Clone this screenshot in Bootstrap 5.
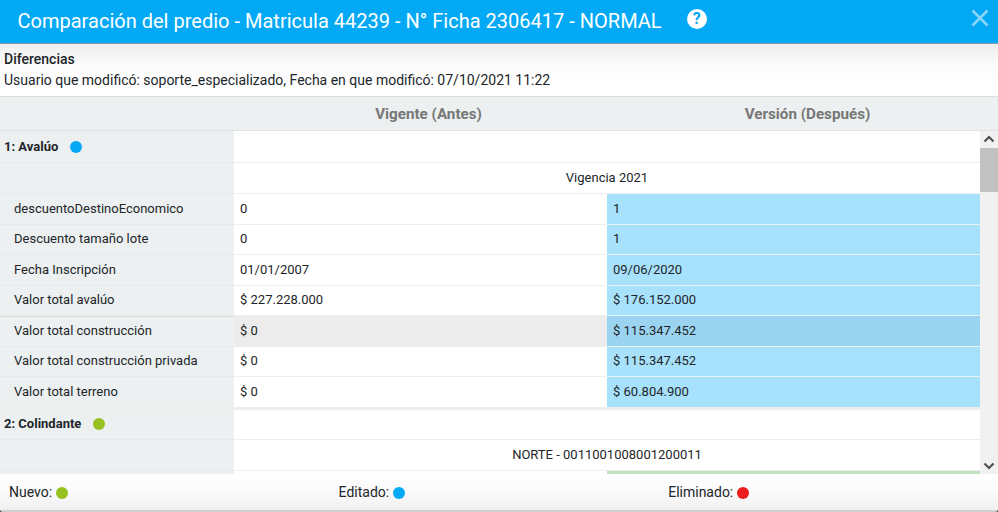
<!DOCTYPE html>
<html lang="es">
<head>
<meta charset="utf-8">
<title>Comparación del predio</title>
<link href="https://cdn.jsdelivr.net/npm/bootstrap@5.3.0/dist/css/bootstrap.min.css" rel="stylesheet">
<style>
html,body{height:100%;margin:0;overflow:hidden;background:#444}
body{font-family:Roboto,"Liberation Sans",sans-serif;font-size:13px;color:#212529;line-height:1.2}
.shell{width:998px;height:512px;border-radius:0 0 3px 3px;overflow:hidden;border-bottom:2px solid #d0d0d0;background:#fff}
.topbar{height:44px;flex:none;background:#03a9f4;border-bottom:1px solid #8a9aa3;color:#fff;padding:0 9px 2px 17.5px}
.topbar h1{font-size:20px;font-weight:400;margin:0;line-height:42px;letter-spacing:.01px}
.helpdot{width:20px;height:20px;border-radius:50%;background:#fff;color:#03a9f4;font-weight:700;font-size:16px;line-height:20px;text-align:center;margin-left:25px;margin-top:-3px}
.closex{margin-left:auto;margin-top:-5px}
.infobox{height:53px;flex:none;padding:7px 4px 0;background:linear-gradient(#efefef 0,#fbfbfb 22px,#fff 40px);border-bottom:1px solid #dcdcdc;font-size:14px}
.infobox b{font-weight:500;display:block;font-size:14px;line-height:17px;margin-bottom:4px}
.infobox span{line-height:17px;display:block}
.headrow{height:34px;flex:none;background:#ecf0f1;border-bottom:1px solid #dee2e3;color:#777;font-size:15.2px;font-weight:700}
.headrow div{text-align:center;line-height:34px}
.hcell0{width:239px}.hcell1{width:379px}.hcell2{width:379px}
.scrollarea{height:343px;flex:none;overflow:hidden}
.tablewrap{flex:1;min-width:0;overflow:hidden}
.cmp{table-layout:fixed;width:980px;border-collapse:separate;border-spacing:0;margin:0}
.cmp td{height:30.5px;padding:0 6px;border-bottom:1px solid #eee;font-size:13px;background:#fff;vertical-align:middle;white-space:nowrap}
.cmp td.lbl{background:#ecf0f1;padding-left:14px;border-bottom-color:#e6eaeb}
.cmp td.sect{padding-left:4px;font-weight:700;font-size:13px}
.cmp tr.tall1 td{height:32px}
.cmp tr.tall2 td{height:31px}
.cmp tr.tall3 td{height:30.5px}
.cmp tr.last td{border-bottom:0;height:29.5px}
.cmp td.mid{text-align:center}
.cmp td.blue{background:#a7e1fc;border-bottom-color:#e8f3f8}
.cmp tr.hov td{background:#ececec}
.cmp tr.hov td.lbl{background:#ecf0f1;box-shadow:inset 0 1px 0 #dcdcdc}
.cmp tr.hov td.blue{background:#9ad4f0}
.cmp tr.gap td{height:3px;padding:0;border:0;background:#eee;font-size:0;line-height:0}
.cmp td.green{background:#c0e0c0;padding:0;border:0;font-size:0}
.dot{display:inline-block;width:12px;height:12px;border-radius:50%;vertical-align:-2px}
.dot-blue{background:#03a9f4}.dot-green{background:#97c11f}.dot-red{background:#ea1c1c}
.sect .dot{margin-left:8px}
.sbar{width:18px;background:#f1f1f1}
.sarrow{height:17px}
.sthumb{height:44px;background:#c1c1c1}
.strack{flex:1}
.legend{flex:1;min-height:0;padding:0 0 0 9px;background:linear-gradient(#fff 0,#fbfbfb 16px,#efefef 38px);font-size:14px}
.legend>div{width:329.6px}
.legend .dot{vertical-align:-2px}
</style>
</head>
<body>
<div class="shell d-flex flex-column">
  <div class="topbar d-flex align-items-center">
    <h1>Comparación del predio - Matricula 44239 - N° Ficha 2306417 - NORMAL</h1>
    <div class="helpdot">?</div>
    <svg class="closex" width="18" height="18" viewBox="0 0 18 18" aria-hidden="true"><path d="M1.5 1.5 16.5 16.5M16.5 1.5 1.5 16.5" stroke="#8ad5f8" stroke-width="2.6" fill="none"/></svg>
  </div>
  <div class="infobox">
    <b>Diferencias</b>
    <span>Usuario que modificó: soporte_especializado, Fecha en que modificó: 07/10/2021 11:22</span>
  </div>
  <div class="headrow d-flex">
    <div class="hcell0"></div><div class="hcell1">Vigente (Antes)</div><div class="hcell2">Versión (Después)</div>
  </div>
  <div class="scrollarea d-flex">
    <div class="tablewrap">
      <table class="cmp">
        <colgroup><col style="width:234px"><col style="width:373px"><col style="width:373px"></colgroup>
        <tbody>
        <tr class="tall1"><td class="lbl sect">1: Avalúo <span class="dot dot-blue"></span></td><td colspan="2"></td></tr>
        <tr class="tall2"><td class="lbl"></td><td colspan="2" class="mid">Vigencia 2021</td></tr>
        <tr><td class="lbl">descuentoDestinoEconomico</td><td>0</td><td class="blue">1</td></tr>
        <tr><td class="lbl">Descuento tamaño lote</td><td>0</td><td class="blue">1</td></tr>
        <tr><td class="lbl">Fecha Inscripción</td><td>01/01/2007</td><td class="blue">09/06/2020</td></tr>
        <tr><td class="lbl">Valor total avalúo</td><td>$ 227.228.000</td><td class="blue">$ 176.152.000</td></tr>
        <tr class="hov"><td class="lbl">Valor total construcción</td><td>$ 0</td><td class="blue">$ 115.347.452</td></tr>
        <tr><td class="lbl">Valor total construcción privada</td><td>$ 0</td><td class="blue">$ 115.347.452</td></tr>
        <tr class="last"><td class="lbl">Valor total terreno</td><td>$ 0</td><td class="blue">$ 60.804.900</td></tr>
        <tr class="gap"><td></td><td colspan="2"></td></tr>
        <tr class="tall3"><td class="lbl sect">2: Colindante <span class="dot dot-green"></span></td><td colspan="2"></td></tr>
        <tr><td class="lbl"></td><td colspan="2" class="mid">NORTE - 0011001008001200011</td></tr>
        <tr><td class="lbl"></td><td></td><td class="green"></td></tr>
        </tbody>
      </table>
    </div>
    <div class="sbar d-flex flex-column">
      <svg class="sarrow" width="18" height="17" viewBox="0 0 18 17" aria-hidden="true"><path d="M4.5 10.5 9 6l4.5 4.5" stroke="#505050" stroke-width="2.2" fill="none"/></svg>
      <div class="sthumb"></div>
      <div class="strack"></div>
      <svg class="sarrow" width="18" height="17" viewBox="0 0 18 17" aria-hidden="true"><path d="M4.5 6.5 9 11l4.5-4.5" stroke="#505050" stroke-width="2.2" fill="none"/></svg>
    </div>
  </div>
  <div class="legend d-flex align-items-center">
    <div>Nuevo: <span class="dot dot-green"></span></div>
    <div>Editado: <span class="dot dot-blue"></span></div>
    <div>Eliminado: <span class="dot dot-red"></span></div>
  </div>
</div>
<script src="https://cdn.jsdelivr.net/npm/bootstrap@5.3.0/dist/js/bootstrap.bundle.min.js"></script>
</body>
</html>
